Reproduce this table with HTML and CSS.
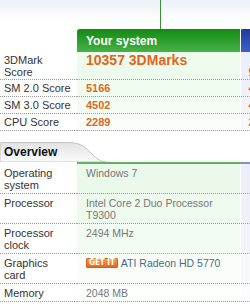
FILE: index.html
```html
<!DOCTYPE html>
<html>
<head>
<meta charset="utf-8">
<link rel="stylesheet" href="styles.css">
</head>
<body>
<div class="top"><div class="vline"></div></div>
<table class="grid scores">
  <colgroup><col class="c1"><col class="c2"><col class="c3"></colgroup>
  <tr class="head">
    <td class="blank"></td>
    <th class="sys">Your system</th>
    <th class="oth"></th>
  </tr>
  <tr class="r1">
    <td class="lbl">3DMark<br>Score</td>
    <td class="sys big">10357 3DMarks</td>
    <td class="oth big low">9871</td>
  </tr>
  <tr class="r2">
    <td class="lbl">SM 2.0 Score</td>
    <td class="sys num">5166</td>
    <td class="oth num">4874</td>
  </tr>
  <tr class="r3">
    <td class="lbl">SM 3.0 Score</td>
    <td class="sys num">4502</td>
    <td class="oth num">4211</td>
  </tr>
  <tr class="r4">
    <td class="lbl">CPU Score</td>
    <td class="sys num">2289</td>
    <td class="oth num">2101</td>
  </tr>
</table>
<div class="tab">Overview</div>
<table class="grid overview">
  <colgroup><col class="c1"><col class="c2"><col class="c3"></colgroup>
  <tr class="first o1">
    <td class="lbl">Operating<br>system</td>
    <td class="sys val">Windows 7</td>
    <td class="oth val"></td>
  </tr>
  <tr class="o2">
    <td class="lbl">Processor</td>
    <td class="sys val">Intel Core 2 Duo Processor T9300</td>
    <td class="oth val"></td>
  </tr>
  <tr class="o3">
    <td class="lbl">Processor<br>clock</td>
    <td class="sys val">2494 MHz</td>
    <td class="oth val"></td>
  </tr>
  <tr class="o4">
    <td class="lbl">Graphics<br>card</td>
    <td class="sys val"><span class="getit">GET IT</span><span class="link">ATI Radeon HD 5770</span></td>
    <td class="oth val"></td>
  </tr>
  <tr class="o5">
    <td class="lbl">Memory</td>
    <td class="sys val">2048 MB</td>
    <td class="oth val"></td>
  </tr>
</table>
</body>
</html>
```

FILE: styles.css
```css
html, body {
  margin: 0;
  padding: 0;
  overflow: hidden;
  background: #fff;
}
body {
  width: 250px;
  font-family: "Liberation Sans", Arial, sans-serif;
}
.top {
  height: 29px;
  background: linear-gradient(#edf1f6, #ffffff 75%);
}
.vline {
  margin-left: 160px;
  width: 1px;
  height: 29px;
  background: #3a8f3a;
}
table.grid {
  border-collapse: collapse;
  table-layout: fixed;
  width: 262px;
}
col.c1 { width: 77px; }
col.c2 { width: 163px; }
col.c3 { width: 22px; }

.grid td {
  padding: 2px 0 2px 0;
  line-height: 12px;
  vertical-align: top;
  border-bottom: 1px dotted #9c9c9c;
}
.grid td.lbl {
  padding-left: 4px;
  font-size: 11px;
  color: #333;
}
.grid td.sys {
  padding-left: 9px;
  padding-right: 8px;
  border-right: 1px solid #fff;
}
.grid td.oth {
  padding-left: 8px;
  white-space: nowrap;
  overflow: hidden;
}

/* header */
.head th {
  height: 23px;
  padding: 0;
  text-align: left;
}
.head td.blank {
  border: none;
  padding: 0;
}
.head th.sys {
  padding-left: 9px;
  color: #fff;
  font-size: 12px;
  font-weight: bold;
  background: linear-gradient(#138a13, #45b245);
  border-top-left-radius: 3px;
  border-right: 1px solid #fff;
}
.head th.oth {
  background: linear-gradient(#1f3c9c, #3d5fc4);
  border-top-left-radius: 3px;
}

.scores td.lbl { padding-top: 2px; }
.r1 td { padding-top: 2px; padding-bottom: 1px; }
.big {
  font-size: 14px;
  font-weight: bold;
  color: #e0661c;
  line-height: 16px;
}
.big.low { vertical-align: bottom; }
.num {
  font-size: 11px;
  font-weight: bold;
  color: #e0681e;
}
.r1 .sys { background: #edfbed; }
.r2 .sys { background: #f0fcf0; }
.r3 .sys { background: #f4fdf4; }
.r4 .sys { background: #f9fef9; }
.r1 .oth { background: #eceffa; }
.r2 .oth { background: #eff1fa; }
.r3 .oth { background: #f3f4fb; }
.r4 .oth { background: #f8f9fd; }

/* overview tab */
.tab {
  margin-top: 11px;
  height: 20px;
  width: 106px;
  box-sizing: border-box;
  padding: 4px 0 0 4px;
  font-size: 12px;
  font-weight: bold;
  color: #111;
  line-height: 13px;
  background: url("data:image/svg+xml,%3Csvg xmlns='http://www.w3.org/2000/svg' width='106' height='20'%3E%3Cdefs%3E%3ClinearGradient id='g' x1='0' y1='0' x2='0' y2='1'%3E%3Cstop offset='0' stop-color='%23e2e2e2'/%3E%3Cstop offset='1' stop-color='%23fbfbfb'/%3E%3C/linearGradient%3E%3C/defs%3E%3Cpath d='M0 20 L0 2 Q0 0.5 2 0.5 L68 0.5 C78 0.5 83 3 89 9 C95 15 99 19.5 106 20 Z' fill='url(%23g)' stroke='%23c4c4c4' stroke-width='1'/%3E%3C/svg%3E") no-repeat;
}

/* overview table */
.overview td {
  padding-top: 3px;
  padding-bottom: 2px;
}
.overview .first td.sys { border-top: 2px solid #62b062; }
.overview .first td.oth { border-top: 2px solid #8492d2; }
.overview .first td.lbl { border-top: 2px solid transparent; }
.val {
  font-size: 10.5px;
  color: #777;
}
.o1 .sys { background: #ebf9eb; }
.o2 .sys { background: #eefaee; }
.o3 .sys { background: #f3fcf3; }
.o4 .sys { background: #f9fef9; }
.o5 .sys { background: #fdfffd; }
.o1 .oth { background: #eceef8; }
.o2 .oth { background: #eff1f9; }
.o3 .oth { background: #f3f4fb; }
.o4 .oth { background: #f8f9fd; }
.o5 .oth { background: #fcfcfe; }

.getit {
  display: inline-block;
  height: 10px;
  line-height: 10px;
  padding: 0 3px;
  margin: 1px 3px 0 0;
  vertical-align: top;
  font-family: "Liberation Sans Narrow", "DejaVu Sans Condensed", sans-serif;
  font-size: 8px;
  font-weight: bold;
  color: #fff;
  background: linear-gradient(#f7a058, #e3651a);
  border-radius: 2px;
  box-shadow: inset 0 0 0 1px #d0600f;
}
.link {
  color: #4b6a8e;
}
```
